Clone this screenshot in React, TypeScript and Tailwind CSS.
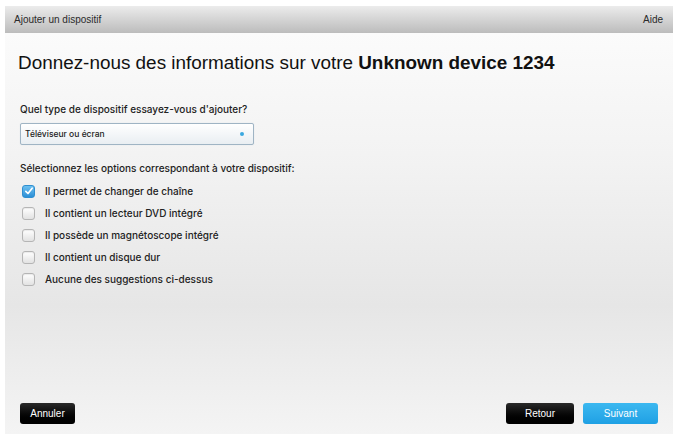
import { useState } from 'react';

const options = [
  'Il permet de changer de chaîne',
  'Il contient un lecteur DVD intégré',
  'Il possède un magnétoscope intégré',
  'Il contient un disque dur',
  'Aucune des suggestions ci-dessus',
];

const small = { fontFamily: 'Inter, "Liberation Sans", sans-serif' };

function Checkbox({ checked }: { checked: boolean }) {
  if (checked) {
    return (
      <span className="flex h-[13px] w-[13px] items-center justify-center rounded-[3px] border border-[#2f8fd0] bg-gradient-to-b from-[#6cc0f0] to-[#2b8fd6]">
        <svg viewBox="0 0 12 12" className="h-[10px] w-[10px]">
          <path d="M2.2 6.4 L4.8 9 L9.8 2.6" fill="none" stroke="#fff" strokeWidth="2" strokeLinecap="round" strokeLinejoin="round" />
        </svg>
      </span>
    );
  }
  return <span className="block h-[13px] w-[13px] rounded-[3px] border border-[#b5b5b5] bg-gradient-to-b from-[#ffffff] to-[#e2e2e2] shadow-[inset_0_1px_1px_rgba(0,0,0,0.08)]" />;
}

export default function App() {
  const [checked, setChecked] = useState([true, false, false, false, false]);

  return (
    <div className="h-[434px] w-[673px] bg-white pl-[5px] pt-[6px]" style={{ fontFamily: '"Liberation Sans", Arial, sans-serif' }}>
      <div className="flex h-[428px] flex-col">
        {/* title bar */}
        <div className="flex h-[27px] items-center justify-between bg-gradient-to-b from-[#ececec] to-[#bcbcbc] pl-[9px] pr-[10px] text-[10px] text-[#2a2a2a]">
          <span>Ajouter un dispositif</span>
          <span>Aide</span>
        </div>

        {/* body */}
        <div className="flex flex-1 flex-col bg-[linear-gradient(to_bottom,#fbfbfb_0%,#f3f3f3_30%,#e6e6e6_68%,#f4f4f4_100%)] px-[15px]">
          <h1 className="mt-[18px] -ml-[2px] text-[18.9px] leading-[24px] text-[#111]">
            Donnez-nous des informations sur votre <b>Unknown device 1234</b>
          </h1>

          <p className="mt-[27px] text-[10px] font-medium text-[#222]" style={small}>Quel type de dispositif essayez-vous d'ajouter?</p>
          <div
            className="mt-[6px] flex h-[22px] w-[234px] items-center justify-between rounded-[2px] border border-[#9fb4c4] bg-gradient-to-b from-[#ffffff] to-[#e9eef2] pl-[4px] pr-[9px] text-[8.5px] font-medium text-[#222] shadow-[0_0_1px_#c6d6e2]"
            style={small}
          >
            <span>Téléviseur ou écran</span>
            <span className="h-[4px] w-[4px] rounded-full bg-[#3aa8e0]" />
          </div>

          <p className="mt-[16px] text-[10px] font-medium text-[#222]" style={small}>Sélectionnez les options correspondant à votre dispositif:</p>
          <div className="mt-[4px] flex flex-col" style={small}>
            {options.map((label, i) => (
              <label
                key={label}
                className="flex h-[22px] items-center gap-[10px] pl-[2px] text-[10px] font-medium text-[#222]"
                onClick={() => setChecked(c => c.map((v, j) => (j === i ? !v : v)))}
              >
                <Checkbox checked={checked[i]} />
                <span>{label}</span>
              </label>
            ))}
          </div>

          <div className="mt-auto mb-[10px] flex items-center justify-between">
            <button className="h-[21px] w-[55px] rounded-[3px] bg-gradient-to-b from-[#2a2a2a] to-[#000] text-[10px] text-white">Annuler</button>
            <div className="flex gap-[9px]">
              <button className="h-[21px] w-[68px] rounded-[3px] bg-gradient-to-b from-[#2a2a2a] to-[#000] text-[10px] text-white">Retour</button>
              <button className="h-[21px] w-[75px] rounded-[3px] bg-gradient-to-b from-[#3bb8f0] to-[#1ea0e4] text-[10px] text-white">Suivant</button>
            </div>
          </div>
        </div>
      </div>
    </div>
  );
}
